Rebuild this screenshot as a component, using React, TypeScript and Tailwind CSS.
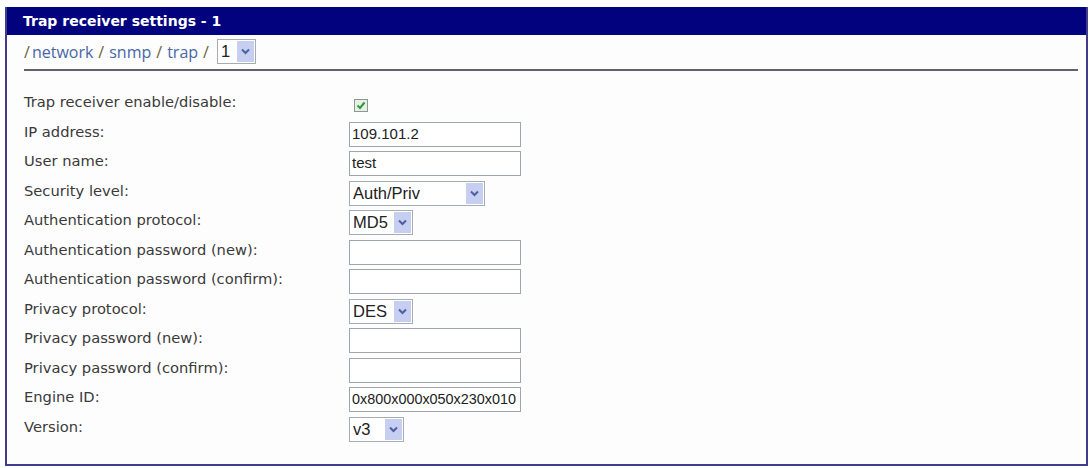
import React from "react"

const labelFont = { fontFamily: '"DejaVu Sans", Verdana, sans-serif' }

function Chevron() {
  return (
    <svg width="9" height="7" viewBox="0 0 9 7" fill="none">
      <path d="M1 1.5 L4.5 5 L8 1.5" stroke="#4f5f9e" strokeWidth="2" />
    </svg>
  )
}

function DropDown({ value, className }: { value: string; className: string }) {
  return (
    <div className={`flex h-[25px] items-center border border-[#a5acb2] bg-white ${className}`}>
      <span className="flex-1 truncate pl-[3px] font-['Liberation_Sans',Arial,sans-serif] text-[16.5px] text-[#222]">
        {value}
      </span>
      <span className="mr-[1px] flex h-[21px] w-[17px] items-center justify-center bg-[#c6cff2]">
        <Chevron />
      </span>
    </div>
  )
}

function TextBox({ value = "", className = "text-[15px]" }: { value?: string; className?: string }) {
  return (
    <div
      className={`flex h-[25px] w-[172px] items-center overflow-hidden whitespace-nowrap border border-[#9ea6ac] bg-white pl-[2px] font-['Liberation_Sans',Arial,sans-serif] text-[#222] ${className}`}
    >
      {value}
    </div>
  )
}

function Check() {
  return (
    <div className="ml-[5px] mt-[7px] flex h-[13px] w-[14px] items-center justify-center border border-[#8c9a8e] bg-[#e8efe8]">
      <svg width="10" height="9" viewBox="0 0 10 9" fill="none">
        <path d="M1.5 4.5 L4 7 L8.5 1.5" stroke="#2f9a35" strokeWidth="2" />
      </svg>
    </div>
  )
}

const rows: { label: string; control: React.ReactNode }[] = [
  { label: "Trap receiver enable/disable:", control: <Check /> },
  { label: "IP address:", control: <TextBox value="109.101.2" /> },
  { label: "User name:", control: <TextBox value="test" /> },
  { label: "Security level:", control: <DropDown value="Auth/Priv" className="w-[136px]" /> },
  { label: "Authentication protocol:", control: <DropDown value="MD5" className="w-[64px]" /> },
  { label: "Authentication password (new):", control: <TextBox /> },
  { label: "Authentication password (confirm):", control: <TextBox /> },
  { label: "Privacy protocol:", control: <DropDown value="DES" className="w-[64px]" /> },
  { label: "Privacy password (new):", control: <TextBox /> },
  { label: "Privacy password (confirm):", control: <TextBox /> },
  { label: "Engine ID:", control: <TextBox value="0x800x000x050x230x010" className="text-[14.4px]" /> },
  { label: "Version:", control: <DropDown value="v3" className="w-[55px]" /> },
]

export default function App() {
  return (
    <div className="h-[468px] w-[1090px] bg-white pl-[5px] pr-[2px] pt-[7px]">
      <div className="flex h-[459px] flex-col border-2 border-t-0 border-[#413d8c] bg-[#fdfdfd]">
        {/* header bar */}
        <div className="flex h-[28px] items-center bg-[#02027e] pl-[16px]">
          <span className="text-[14px] font-bold text-white" style={labelFont}>
            Trap receiver settings - 1
          </span>
        </div>

        {/* breadcrumb */}
        <div className="pl-[17px] pr-[8px] pt-[4px]">
          <div className="flex items-center font-['Open_Sans',sans-serif] text-[16px] text-[#6a6438]">
            <span>/</span>
            <span className="ml-[2px] text-[#4767a6]">network</span>
            <span className="mx-[5px]">/</span>
            <span className="text-[#4767a6]">snmp</span>
            <span className="mx-[5px]">/</span>
            <span className="text-[#4767a6]">trap</span>
            <span className="mx-[5px]">/</span>
            <DropDown value="1" className="ml-[3px] w-[39px]" />
          </div>
          <div className="mt-[5px] h-[2px] bg-[#62626c]" />
        </div>

        {/* settings form */}
        <div className="mt-[21px] flex flex-col gap-[4.5px] pl-[17px]">
          {rows.map((row) => (
            <div key={row.label} className="flex h-[25px] items-start">
              <div className="w-[325px] text-[14.7px] leading-[20px] text-[#3a3a3a]" style={labelFont}>
                {row.label}
              </div>
              {row.control}
            </div>
          ))}
        </div>
      </div>
    </div>
  )
}
